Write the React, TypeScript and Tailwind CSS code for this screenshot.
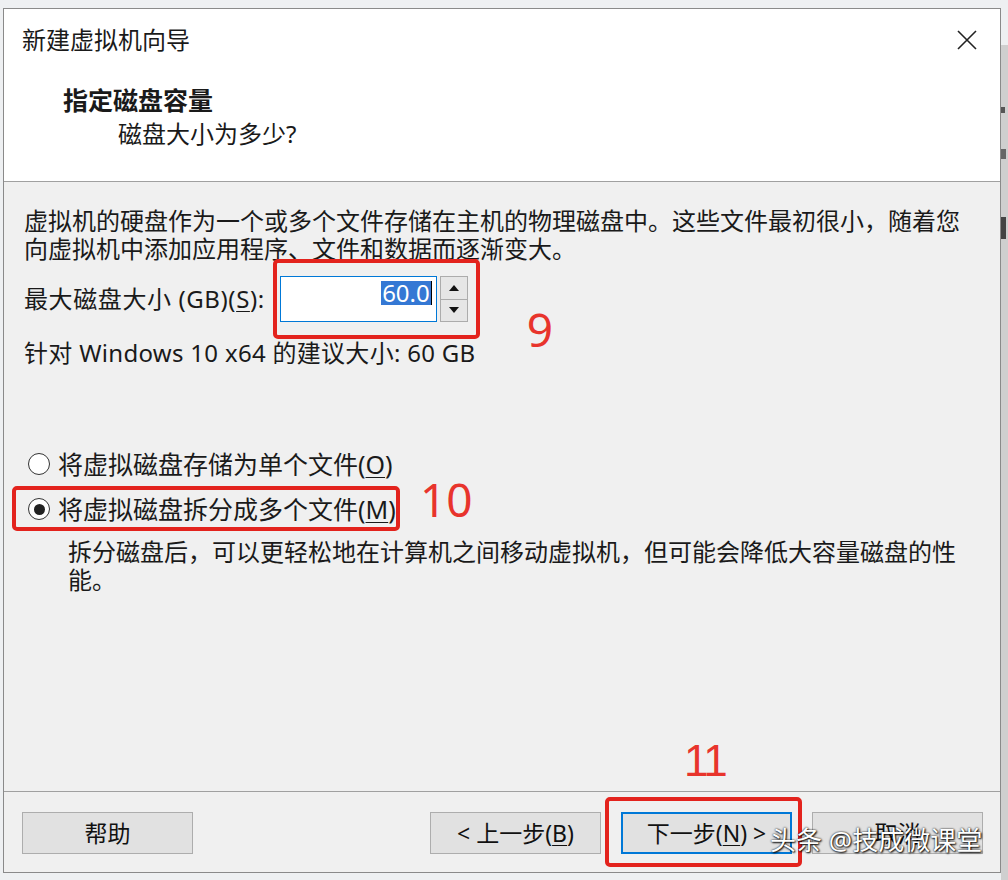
import React from "react";

const font = "font-['Noto_Sans','Noto_Sans_CJK_SC',sans-serif]";

const U = ({ children }: { children: React.ReactNode }) => (
  <span className="underline underline-offset-[3px] decoration-1">{children}</span>
);

function Btn({ children, primary }: { children: React.ReactNode; primary?: boolean }) {
  return (
    <div
      className={`h-[42px] w-[171px] flex items-center justify-center bg-[#e1e1e1] text-[23px] text-[#111] ${
        primary ? "border-2 border-[#0078d7]" : "border border-[#adadad]"
      }`}
    >
      {children}
    </div>
  );
}

function Radio({ checked }: { checked?: boolean }) {
  return (
    <div className="w-[22px] h-[22px] rounded-full border-[1.5px] border-[#333] bg-white flex items-center justify-center shrink-0">
      {checked && <div className="w-[11px] h-[11px] rounded-full bg-[#222]" />}
    </div>
  );
}

const Mark = ({ children }: { children: React.ReactNode }) => (
  <span className="font-['Noto_Sans',sans-serif] text-[46px] leading-none text-[#e8342c]">{children}</span>
);

export default function App() {
  return (
    <div className={`w-[1008px] h-[880px] bg-[#eef0f2] flex overflow-hidden ${font} text-[#1a1a1a]`}>
      {/* dialog window */}
      <div className="ml-[3px] mt-[8px] w-[998px] h-[865px] border border-[#8a8a8a] bg-[#f0f0f0] flex flex-col shrink-0">
        {/* title bar */}
        <div className="h-[62px] bg-white flex items-center justify-between pl-[18px] pr-[20px]">
          <span className="text-[24px] leading-none">新建虚拟机向导</span>
          <svg width="22" height="22" viewBox="0 0 22 22" className="mr-[2px]">
            <path d="M2 2 L20 20 M20 2 L2 20" stroke="#222" strokeWidth="1.6" />
          </svg>
        </div>

        {/* header */}
        <div className="h-[111px] bg-white border-b border-[#a0a0a0] pt-[12px]">
          <div className="pl-[59px] text-[25px] font-bold leading-[34px]">指定磁盘容量</div>
          <div className="pl-[114px] text-[24px] leading-[34px]">磁盘大小为多少?</div>
        </div>

        {/* body */}
        <div className="flex-1 pl-[20px] pt-[25px] text-[24px] relative">
          <p className="leading-[28px] whitespace-nowrap">
            虚拟机的硬盘作为一个或多个文件存储在主机的物理磁盘中。这些文件最初很小，随着您
            <br />
            向虚拟机中添加应用程序、文件和数据而逐渐变大。
          </p>

          <div className="mt-[13px] flex items-center h-[46px]">
            <span className="leading-none tracking-[0.6px]">
              最大磁盘大小 (GB)(<U>S</U>):
            </span>
            <div className="relative ml-[15px] flex h-[46px]">
              <div className="w-[157px] h-[46px] bg-white border border-[#0078d7] flex items-start justify-end pr-[4px] pt-[4px]">
                <span className="bg-[#3478d4] text-white text-[24px] leading-[24px] px-[1px]">60.0</span>
                <span className="w-[1px] h-[24px] bg-black" />
              </div>
              <div className="ml-[3px] w-[28px] h-[46px] flex flex-col">
                <div className="flex-1 bg-[#e6e6e6] border border-[#acacac] flex items-center justify-center">
                  <svg width="10" height="6" viewBox="0 0 10 6"><path d="M5 0 L10 6 L0 6 Z" fill="#111" /></svg>
                </div>
                <div className="flex-1 bg-[#e6e6e6] border border-t-0 border-[#acacac] flex items-center justify-center">
                  <svg width="10" height="6" viewBox="0 0 10 6"><path d="M0 0 L10 0 L5 6 Z" fill="#111" /></svg>
                </div>
              </div>
              <div className="absolute left-[-7px] top-[-17px] w-[207px] h-[80px] border-[4px] border-[#e3231d] rounded-[5px]" />
              <div className="absolute left-[247px] top-[30px]">
                <Mark>9</Mark>
              </div>
            </div>
          </div>

          <p className="mt-[17px] leading-[28px] tracking-[0.3px]">针对 Windows 10 x64 的建议大小: 60 GB</p>

          <div className="mt-[82px] ml-[4px] flex items-center gap-[8px] h-[30px]">
            <Radio />
            <span className="text-[25px] leading-none">
              将虚拟磁盘存储为单个文件(<U>O</U>)
            </span>
          </div>

          <div className="mt-[15px] ml-[4px] flex items-center gap-[8px] h-[30px] relative">
            <Radio checked />
            <span className="text-[25px] leading-none">
              将虚拟磁盘拆分成多个文件(<U>M</U>)
            </span>
            <div className="absolute left-[-16px] top-[-8px] w-[388px] h-[45px] border-[4px] border-[#e3231d] rounded-[5px]" />
            <div className="absolute left-[392px] top-[-18px]">
              <Mark>10</Mark>
            </div>
          </div>

          <p className="mt-[14px] ml-[44px] leading-[28px] whitespace-nowrap">
            拆分磁盘后，可以更轻松地在计算机之间移动虚拟机，但可能会降低大容量磁盘的性
            <br />
            能。
          </p>

          <div className="absolute left-[680px] bottom-[6px]">
            <span className="font-['Liberation_Sans',sans-serif] text-[44px] leading-none text-[#e8342c] tracking-[-2px]">11</span>
          </div>
        </div>

        {/* footer */}
        <div className="h-[81px] border-t border-[#a0a0a0] flex items-start pt-[20px] pl-[18px] pr-[17px] relative">
          <Btn>帮助</Btn>
          <div className="flex-1" />
          <div className="flex gap-[20px]">
            <Btn>
              &lt; 上一步(<U>B</U>)
            </Btn>
            <div className="relative">
              <Btn primary>
                下一步(<U>N</U>) &gt;
              </Btn>
              <div className="absolute left-[-16px] top-[-15px] w-[197px] h-[70px] border-[4px] border-[#e3231d] rounded-[5px]" />
            </div>
            <Btn>取消</Btn>
          </div>
          <div className="absolute left-[766px] top-[35px] text-[26px] leading-none text-white whitespace-nowrap [text-shadow:0_0_2px_#000,1px_1px_2px_#000]">
            头条 @技成微课堂
          </div>
        </div>
      </div>

      {/* strip of the window behind */}
      <div className="mt-[45px] flex-1 h-[835px] bg-[#cfcfcf] flex flex-col items-start">
        <div className="mt-[62px] w-[4px] h-[6px] bg-[#555]" />
        <div className="mt-[36px] w-[5px] h-[10px] bg-[#666]" />
        <div className="mt-[58px] w-[5px] h-[22px] bg-[#444]" />
      </div>
    </div>
  );
}
